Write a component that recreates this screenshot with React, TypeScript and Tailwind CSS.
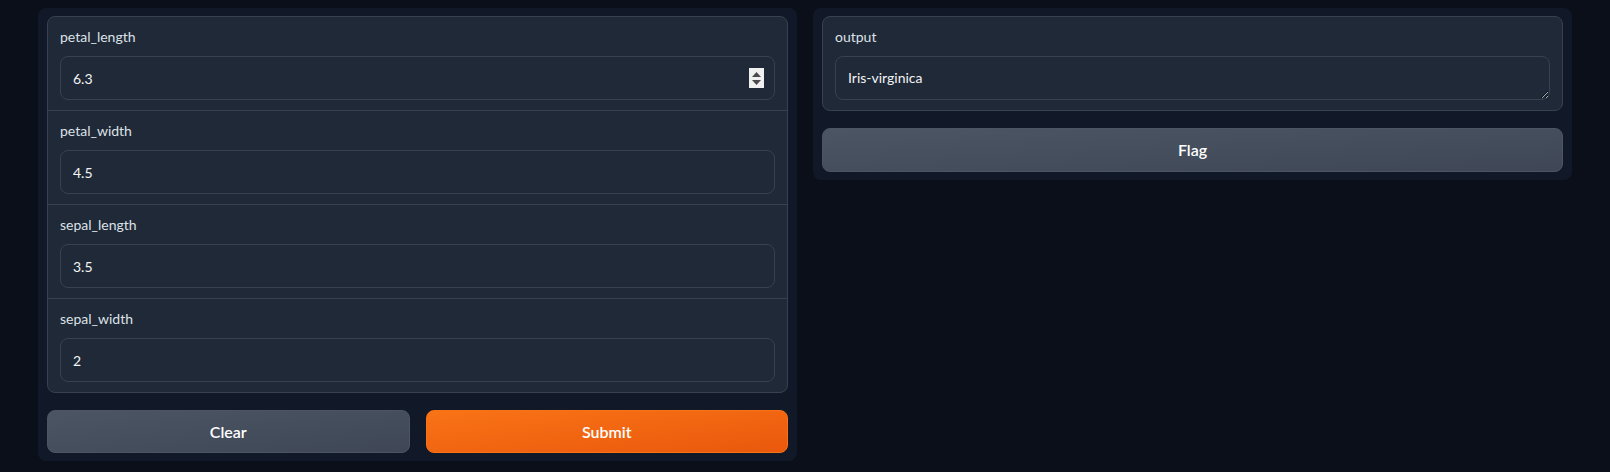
import { useState } from 'react';

const fields = [
  { name: 'petal_length', value: '6.3', spinner: true },
  { name: 'petal_width', value: '4.5' },
  { name: 'sepal_length', value: '3.5' },
  { name: 'sepal_width', value: '2' },
];

const Spinner = () => (
  <span className="absolute right-[11px] top-1/2 -translate-y-1/2 w-[15px] h-[20px] bg-[#f0f0f0] flex flex-col items-center justify-center gap-[3px]">
    <svg width="9" height="5" viewBox="0 0 9 5">
      <path d="M4.5 0 L9 5 L0 5 Z" fill="#4a4a4a" />
    </svg>
    <svg width="9" height="5" viewBox="0 0 9 5">
      <path d="M0 0 L9 0 L4.5 5 Z" fill="#4a4a4a" />
    </svg>
  </span>
);

export default function App() {
  const [values, setValues] = useState(fields.map(f => f.value));

  return (
    <div className="min-h-[472px] bg-[#0b0f19] px-[38px] pt-2 flex gap-4 items-start font-['Lato','Liberation_Sans',sans-serif]">
      <section className="flex-1 bg-[#111827] rounded-lg px-[9px] pt-2 pb-2">
        <div className="border border-[#374151] rounded-lg bg-[#1f2937] divide-y divide-[#374151]">
          {fields.map((f, i) => (
            <label key={f.name} className="block px-3 pt-[10px] pb-[10px]">
              <span className="block text-sm leading-5 text-[#dde1e7] mb-[9px]">{f.name}</span>
              <div className="relative">
                <input
                  type="text"
                  value={values[i]}
                  onChange={e => setValues(v => v.map((x, j) => (j === i ? e.target.value : x)))}
                  className="w-full h-[44px] rounded-lg border border-[#374151] bg-[#1f2937] px-3 text-sm text-[#f3f4f6] outline-none"
                />
                {f.spinner && <Spinner />}
              </div>
            </label>
          ))}
        </div>

        <div className="mt-[17px] grid grid-cols-2 gap-4">
          <button className="h-[43px] rounded-lg border border-[#4b5563] bg-gradient-to-br from-[#4b5563] to-[#3f4756] text-white text-base font-semibold">
            Clear
          </button>
          <button className="h-[43px] rounded-lg border border-[#f97316] bg-gradient-to-br from-[#f97316] to-[#ea580c] text-white text-base font-semibold">
            Submit
          </button>
        </div>
      </section>

      <section className="flex-1 bg-[#111827] rounded-lg px-[9px] pt-2 pb-2">
        <div className="border border-[#374151] rounded-lg bg-[#1f2937]">
          <label className="block px-3 pt-[10px] pb-[10px]">
            <span className="block text-sm leading-5 text-[#dde1e7] mb-[9px]">output</span>
            <textarea
              readOnly
              value="Iris-virginica"
              className="block w-full h-[44px] rounded-lg border border-[#374151] bg-[#1f2937] px-3 py-[11px] text-sm leading-[19px] text-[#f3f4f6] outline-none"
            />
          </label>
        </div>

        <button className="mt-[17px] w-full h-[44px] rounded-lg border border-[#4b5563] bg-gradient-to-br from-[#4b5563] to-[#3f4756] text-white text-base font-semibold">
          Flag
        </button>
      </section>
    </div>
  );
}
